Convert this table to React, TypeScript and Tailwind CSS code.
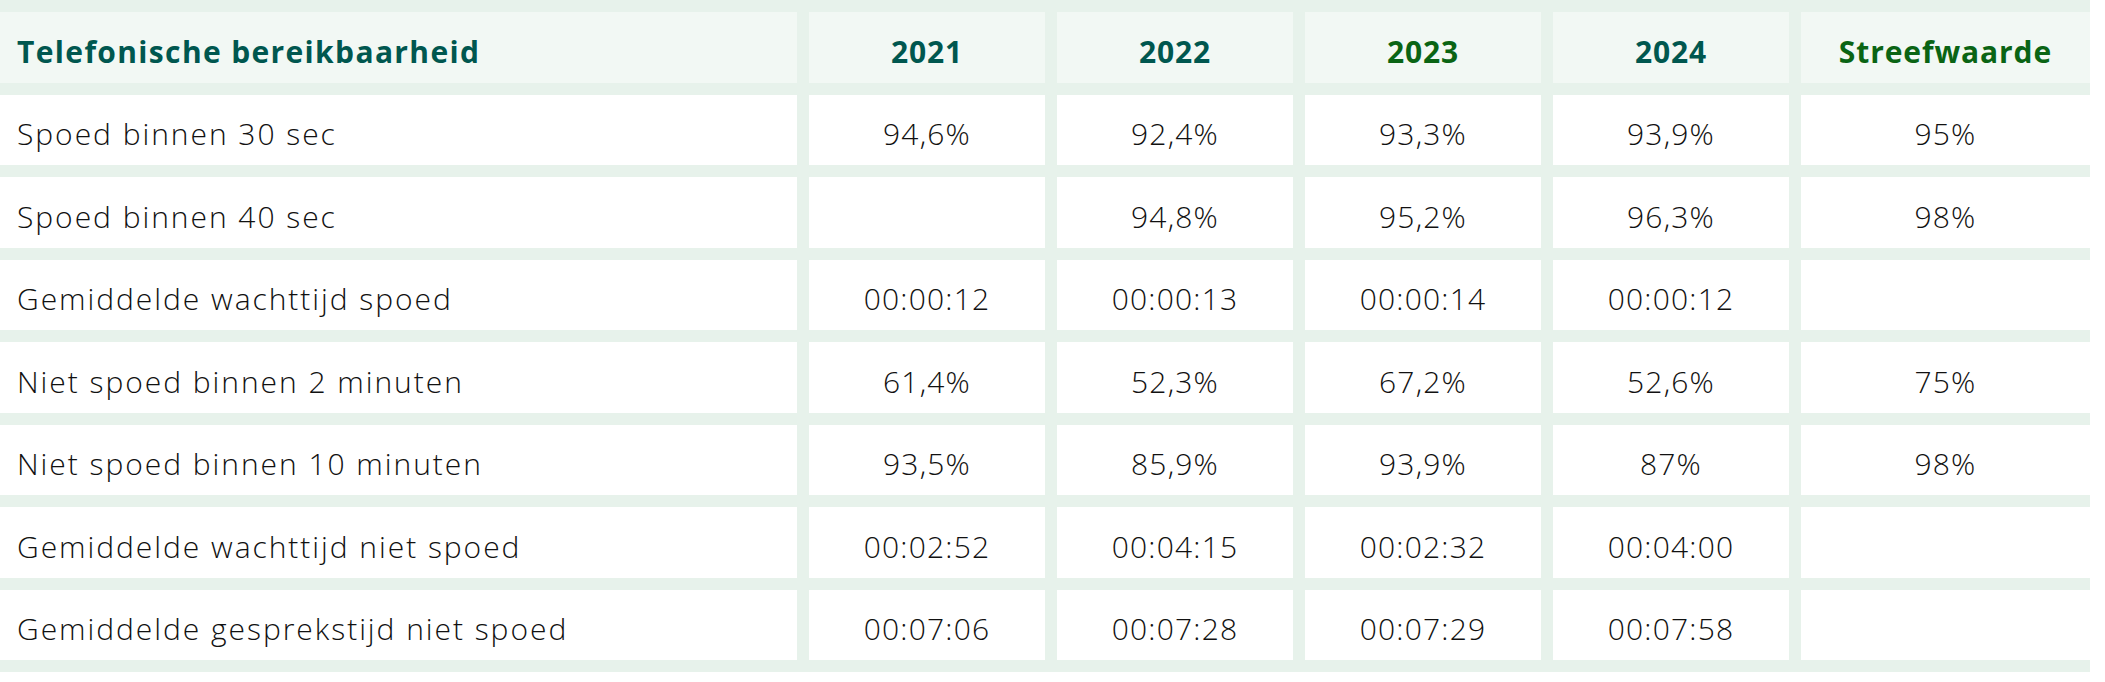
const headers = [
  { label: "2021", tone: "teal" },
  { label: "2022", tone: "teal" },
  { label: "2023", tone: "green" },
  { label: "2024", tone: "teal" },
  { label: "Streefwaarde", tone: "green" },
] as const;

const rows: [string, string, string, string, string, string][] = [
  ["Spoed binnen 30 sec", "94,6%", "92,4%", "93,3%", "93,9%", "95%"],
  ["Spoed binnen 40 sec", "", "94,8%", "95,2%", "96,3%", "98%"],
  ["Gemiddelde wachttijd spoed", "00:00:12", "00:00:13", "00:00:14", "00:00:12", ""],
  ["Niet spoed binnen 2 minuten", "61,4%", "52,3%", "67,2%", "52,6%", "75%"],
  ["Niet spoed binnen 10 minuten", "93,5%", "85,9%", "93,9%", "87%", "98%"],
  ["Gemiddelde wachttijd niet spoed", "00:02:52", "00:04:15", "00:02:32", "00:04:00", ""],
  ["Gemiddelde gesprekstijd niet spoed", "00:07:06", "00:07:28", "00:07:29", "00:07:58", ""],
];

export default function App() {
  return (
    <div className="min-h-screen bg-white font-['Open_Sans','Liberation_Sans',sans-serif]">
      <div className="grid w-[2090px] grid-cols-[797px_236px_236px_236px_236px_289px] gap-3 bg-[#e7f2eb] py-3">
        {/* header */}
        <div className="flex h-[70.5px] items-center bg-[#f2f8f4] pl-[17px] pt-2 text-[30px] font-bold tracking-[0.045em] text-[#00574f]">
          Telefonische bereikbaarheid
        </div>
        {headers.map((h) => (
          <div
            key={h.label}
            className={
              h.tone === "green"
                ? "flex h-[70.5px] items-center justify-center bg-[#f2f8f4] pt-2 text-[30px] font-bold tracking-[0.03em] text-[#0a6414]"
                : "flex h-[70.5px] items-center justify-center bg-[#f2f8f4] pt-2 text-[30px] font-bold tracking-[0.03em] text-[#00574f]"
            }
          >
            {h.label}
          </div>
        ))}

        {/* body */}
        {rows.map((r) => (
          <Row key={r[0]} cells={r} />
        ))}
      </div>
    </div>
  );
}

function Row({ cells }: { cells: string[] }) {
  const [label, ...values] = cells;
  return (
    <>
      <div className="flex h-[70.5px] items-center bg-white pl-[17px] pt-2 text-[30px] font-light tracking-[0.065em] text-[#111111]">
        {label}
      </div>
      {values.map((v, i) => (
        <div
          key={i}
          className="flex h-[70.5px] items-center justify-center bg-white pt-2 text-[30px] font-light tracking-[0.04em] text-[#111111]"
        >
          {v}
        </div>
      ))}
    </>
  );
}
